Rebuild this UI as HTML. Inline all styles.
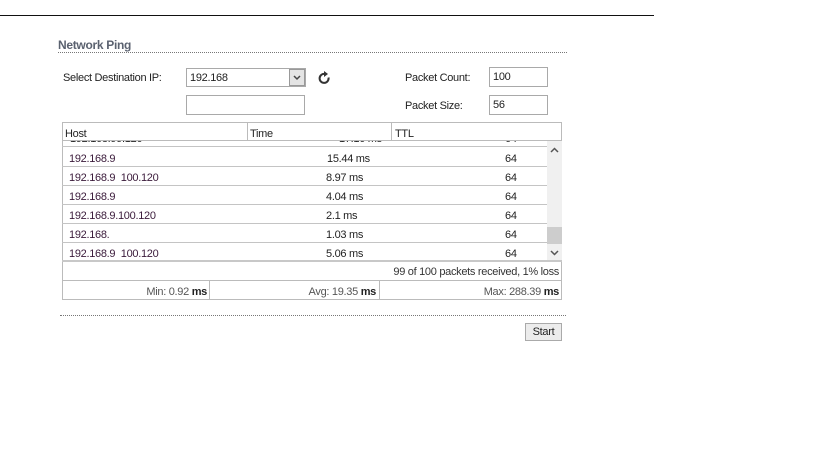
<!DOCTYPE html>
<html><head><meta charset="utf-8"><style>
*{margin:0;padding:0;box-sizing:border-box}
body{width:819px;height:460px;background:#fff;position:relative;overflow:hidden;font-family:"Liberation Sans",Arial,sans-serif;font-size:11px;letter-spacing:-0.3px;color:#222}
.a{position:absolute}
.inp{position:absolute;border:1px solid #a9a9a9;background:#fff;padding-left:3px;line-height:18px;font-size:11px}
.hl{position:absolute;left:62px;width:485px;height:1px;background:#c4c4c4}
.cell{position:absolute;font-size:11px;color:#222}
.host{color:#3a1a3a}
</style></head><body>
<div class="a" style="left:0;top:15px;width:654px;height:1px;background:#111"></div>
<div class="a" style="left:58px;top:38px;font-weight:bold;font-size:12px;color:#5b6270">Network Ping</div>
<div class="a" style="left:58px;top:52px;width:509px;border-top:1px dotted #777"></div>

<div class="a" style="left:63px;top:72px">Select Destination IP:</div>
<div class="inp" style="left:186px;top:68px;width:120px;height:19px">192.168</div>
<div class="a" style="left:289px;top:69px;width:16px;height:17px;background:#e4e4e4;border:1px solid #999"><svg width="14" height="15" viewBox="0 0 14 15"><path d="M4 6 L7 9 L10 6" fill="none" stroke="#444" stroke-width="1.5"/></svg></div>
<svg class="a" style="left:318px;top:70px" width="14" height="16" viewBox="0 0 14 16"><path d="M10.5 7.5 A4.5 4.5 0 1 1 7 4" fill="none" stroke="#333" stroke-width="2"/><path d="M6 1 L10 4 L6 7 Z" fill="#333"/></svg>
<div class="inp" style="left:186px;top:95px;width:119px;height:20px"></div>

<div class="a" style="left:405px;top:72px">Packet Count:</div>
<div class="inp" style="left:489px;top:67px;width:59px;height:20px">100</div>
<div class="a" style="left:405px;top:100px">Packet Size:</div>
<div class="inp" style="left:489px;top:95px;width:59px;height:20px">56</div>

<div class="a" style="left:62px;top:122px;width:500px;height:178px;border:1px solid #bbb"></div>
<div class="a" style="left:62px;top:140px;width:500px;height:1px;background:#bbb"></div>
<div class="a" style="left:247px;top:122px;width:1px;height:19px;background:#bbb"></div>
<div class="a" style="left:391px;top:122px;width:1px;height:19px;background:#bbb"></div>
<div class="a" style="left:65px;top:128px">Host</div>
<div class="a" style="left:250px;top:128px">Time</div>
<div class="a" style="left:395px;top:128px">TTL</div>

<div class="a" style="left:62px;top:141px;width:485px;height:5px;overflow:hidden"><div class="cell" style="left:8px;top:-8px">192.168.99.120</div><div class="cell" style="left:277px;top:-8px">17.10 ms</div><div class="cell" style="left:443px;top:-8px">64</div></div>
<div class="hl" style="top:146px"></div>
<div class="cell host" style="left:69px;top:153px">192.168.9</div><div class="cell" style="left:327px;top:153px">15.44 ms</div><div class="cell" style="left:505px;top:153px">64</div>
<div class="hl" style="top:166px"></div>
<div class="cell host" style="left:69px;top:172px">192.168.9&nbsp;&nbsp;100.120</div><div class="cell" style="left:326px;top:172px">8.97 ms</div><div class="cell" style="left:505px;top:172px">64</div>
<div class="hl" style="top:185px"></div>
<div class="cell host" style="left:69px;top:191px">192.168.9</div><div class="cell" style="left:326px;top:191px">4.04 ms</div><div class="cell" style="left:505px;top:191px">64</div>
<div class="hl" style="top:204px"></div>
<div class="cell host" style="left:69px;top:210px">192.168.9.100.120</div><div class="cell" style="left:326px;top:210px">2.1 ms</div><div class="cell" style="left:505px;top:210px">64</div>
<div class="hl" style="top:223px"></div>
<div class="cell host" style="left:69px;top:229px">192.168.</div><div class="cell" style="left:326px;top:229px">1.03 ms</div><div class="cell" style="left:505px;top:229px">64</div>
<div class="hl" style="top:242px"></div>
<div class="cell host" style="left:69px;top:248px">192.168.9&nbsp;&nbsp;100.120</div><div class="cell" style="left:326px;top:248px">5.06 ms</div><div class="cell" style="left:505px;top:248px">64</div>

<div class="a" style="left:547px;top:141px;width:15px;height:120px;background:#f0f0f0"></div>
<div class="a" style="left:547px;top:227px;width:15px;height:17px;background:#cdcdcd"></div>
<svg class="a" style="left:547px;top:145px" width="15" height="10"><path d="M4 7 L7.5 3.5 L11 7" fill="none" stroke="#555" stroke-width="1.5"/></svg>
<svg class="a" style="left:547px;top:248px" width="15" height="10"><path d="M4 3 L7.5 6.5 L11 3" fill="none" stroke="#555" stroke-width="1.5"/></svg>

<div class="a" style="left:62px;top:260px;width:500px;height:2px;background:#c8c8c8"></div>
<div class="a" style="left:62px;top:280px;width:500px;height:1px;background:#bbb"></div>
<div class="a" style="left:62px;top:266px;width:497px;text-align:right;color:#333">99 of 100 packets received, 1% loss</div>
<div class="a" style="left:209px;top:280px;width:1px;height:20px;background:#bbb"></div>
<div class="a" style="left:379px;top:280px;width:1px;height:20px;background:#bbb"></div>
<div class="a" style="left:62px;top:286px;width:145px;text-align:right;color:#555">Min: 0.92 <b style="color:#222">ms</b></div>
<div class="a" style="left:210px;top:286px;width:166px;text-align:right;color:#555">Avg: 19.35 <b style="color:#222">ms</b></div>
<div class="a" style="left:380px;top:286px;width:179px;text-align:right;color:#555">Max: 288.39 <b style="color:#222">ms</b></div>

<div class="a" style="left:60px;top:315px;width:506px;border-top:1px dotted #777"></div>
<div class="a" style="left:525px;top:323px;width:37px;height:18px;background:#ececec;border:1px solid #aaa;text-align:center;line-height:16px;font-size:11px">Start</div>
</body></html>
